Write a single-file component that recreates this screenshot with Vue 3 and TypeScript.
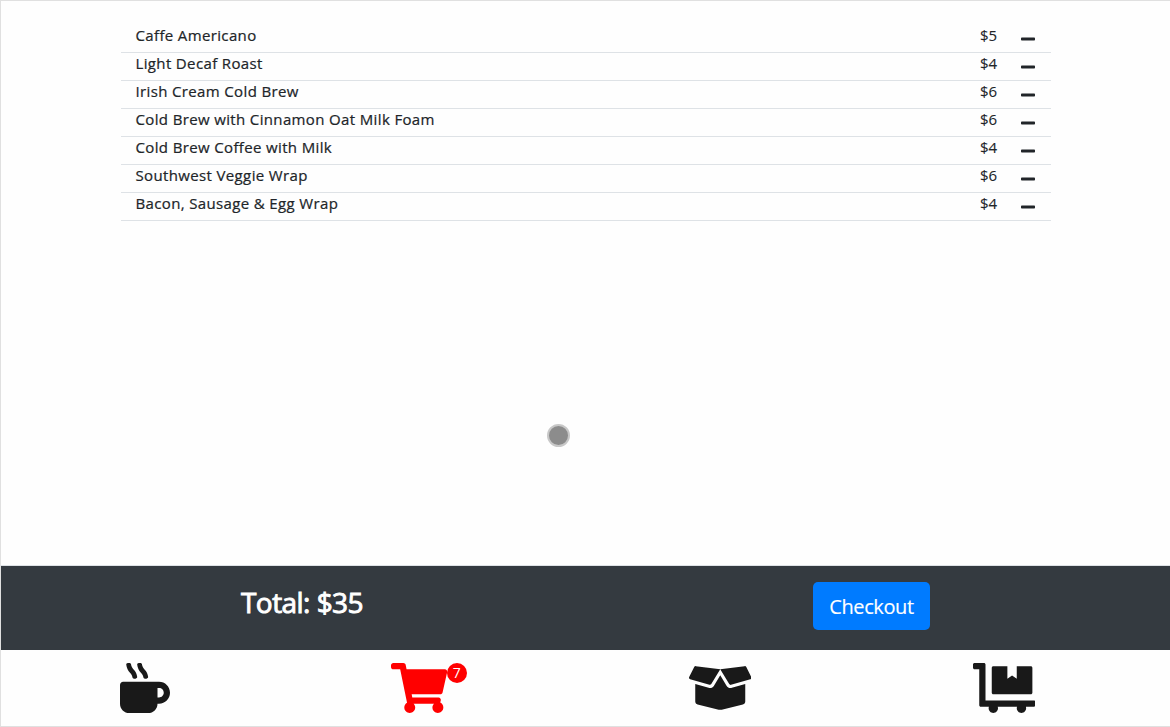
<script setup lang="ts">
interface CartItem {
  name: string
  price: number
}

const items: CartItem[] = [
  { name: 'Caffe Americano', price: 5 },
  { name: 'Light Decaf Roast', price: 4 },
  { name: 'Irish Cream Cold Brew', price: 6 },
  { name: 'Cold Brew with Cinnamon Oat Milk Foam', price: 6 },
  { name: 'Cold Brew Coffee with Milk', price: 4 },
  { name: 'Southwest Veggie Wrap', price: 6 },
  { name: 'Bacon, Sausage & Egg Wrap', price: 4 },
]

const total = items.reduce((sum, item) => sum + item.price, 0)
</script>

<template>
  <div class="app">
    <main class="content">
      <ul class="items">
        <li v-for="item in items" :key="item.name" class="item">
          <span class="name">{{ item.name }}</span>
          <span class="price">${{ item.price }}</span>
          <button class="remove" type="button" :aria-label="`Remove ${item.name}`">
            <svg viewBox="0 0 448 512" width="14" height="16">
              <path d="M416 208H32c-17.67 0-32 14.33-32 32v32c0 17.67 14.33 32 32 32h384c17.67 0 32-14.33 32-32v-32c0-17.67-14.33-32-32-32z" />
            </svg>
          </button>
        </li>
      </ul>
      <div class="pointer"></div>
    </main>

    <section class="summary">
      <h3 class="total">Total: ${{ total }}</h3>
      <button class="checkout" type="button">Checkout</button>
    </section>

    <nav class="tabs">
      <a class="tab">
        <svg viewBox="0 0 512 512" width="50" height="50">
          <path d="M127.1 146.5c1.3 7.7 8 13.5 16 13.5h16.5c9.8 0 17.6-8.5 16.3-18-3.8-28.2-16.4-54.2-36.6-74.7-14.4-14.7-23.6-33.3-26.4-53.5C111.8 5.9 105 0 96.8 0H80.4C70.6 0 63 8.5 64.1 18c3.9 31.9 18 61.3 40.6 84.4 12 12.2 19.7 27.5 22.4 44.1zm112 0c1.3 7.7 8 13.5 16 13.5h16.5c9.8 0 17.6-8.5 16.3-18-3.8-28.2-16.4-54.2-36.6-74.7-14.4-14.7-23.6-33.3-26.4-53.5C223.8 5.9 217 0 208.8 0h-16.4c-9.8 0-17.4 8.5-16.3 18 3.9 31.9 18 61.3 40.6 84.4 12 12.2 19.7 27.5 22.4 44.1zM400 192H32c-17.7 0-32 14.3-32 32v192c0 53 43 96 96 96h192c53 0 96-43 96-96h16c61.8 0 112-50.2 112-112s-50.2-112-112-112zm0 160h-16v-96h16c26.5 0 48 21.5 48 48s-21.5 48-48 48z" />
        </svg>
      </a>
      <a class="tab active">
        <svg viewBox="0 0 576 512" width="56.25" height="50">
          <path d="M528.12 301.319l47.273-208C578.806 78.301 567.391 64 551.99 64H159.208l-9.166-44.81C147.758 8.021 137.93 0 126.529 0H24C10.745 0 0 10.745 0 24v16c0 13.255 10.745 24 24 24h69.883l70.248 343.435C147.325 417.1 136 435.222 136 456c0 30.928 25.072 56 56 56s56-25.072 56-56c0-15.674-6.447-29.835-16.824-40h209.647C430.447 426.165 424 440.326 424 456c0 30.928 25.072 56 56 56s56-25.072 56-56c0-22.172-12.888-41.332-31.579-50.405l5.517-24.276c3.413-15.018-8.002-29.319-23.403-29.319H218.117l-6.545-32h293.145c11.206 0 20.92-7.754 23.403-18.681z" />
        </svg>
        <span class="badge">{{ items.length }}</span>
      </a>
      <a class="tab">
        <svg viewBox="0 0 640 512" width="62.5" height="50">
          <path d="M425.7 256c-16.9 0-32.8-9-41.4-23.4L320 126l-64.2 106.6c-8.7 14.5-24.6 23.5-41.5 23.5-4.5 0-9-.6-13.3-1.9L64 215v178c0 14.7 10 27.5 24.2 31l216.2 54.1c10.2 2.5 20.9 2.5 31 0L551.8 424c14.2-3.6 24.2-16.4 24.2-31V215l-137 39.1c-4.3 1.3-8.8 1.9-13.3 1.9zm212.6-112.2L586.8 41c-3.1-6.2-9.8-9.8-16.7-8.9L320 64l91.7 152.1c3.8 6.3 11.4 9.3 18.5 7.3l197.9-56.5c9.9-2.9 14.7-13.9 10.2-23.1zM53.2 41L1.7 143.8c-4.6 9.2.3 20.2 10.1 23l197.9 56.5c7.1 2 14.7-1 18.5-7.3L320 64 69.8 32.1c-6.9-.8-13.5 2.7-16.6 8.9z" />
        </svg>
      </a>
      <a class="tab">
        <svg viewBox="0 0 640 512" width="62.5" height="50">
          <path d="M208 320h384c8.8 0 16-7.2 16-16V48c0-8.8-7.2-16-16-16H448v128l-48-32-48 32V32H208c-8.8 0-16 7.2-16 16v256c0 8.8 7.2 16 16 16zm416 64H128V16c0-8.8-7.2-16-16-16H16C7.2 0 0 7.2 0 16v32c0 8.8 7.2 16 16 16h48v368c0 8.8 7.2 16 16 16h82.9c-1.8 5-2.9 10.4-2.9 16 0 26.5 21.5 48 48 48s48-21.5 48-48c0-5.6-1.2-11-2.9-16H451c-1.8 5-2.9 10.4-2.9 16 0 26.5 21.5 48 48 48s48-21.5 48-48c0-5.6-1.2-11-2.9-16H624c8.8 0 16-7.2 16-16v-32c0-8.8-7.2-16-16-16z" />
        </svg>
      </a>
    </nav>
  </div>
</template>

<style>
body {
  margin: 0;
  overflow: hidden;
}
</style>

<style scoped>
.app {
  box-sizing: border-box;
  display: flex;
  flex-direction: column;
  height: 727px;
  border: 1px solid #e0e0e0;
  border-right: 0;
  background: #fefefe;
  color: #212529;
  font-family: 'Segoe UI', 'Open Sans', 'Noto Sans', sans-serif;
}

.content {
  position: relative;
  flex: 1;
  padding: 24px 119px 0 120px;
}

.items {
  margin: 0;
  padding: 0;
  list-style: none;
}

.item {
  box-sizing: border-box;
  display: flex;
  height: 28px;
  padding: 0 16px 0 14.5px;
  border-bottom: 1px solid #dee2e6;
  font-size: 15px;
  font-weight: 500;
  line-height: 21px;
}

.name {
  flex: 1;
  letter-spacing: 0.36px;
  -webkit-text-stroke: 0.22px currentColor;
}

.price {
  width: 41px;
  -webkit-text-stroke: 0.1px currentColor;
}

.remove {
  display: flex;
  margin: 6px 0 0;
  padding: 0;
  border: 0;
  background: none;
}

.remove svg {
  fill: #212529;
}

.pointer {
  position: absolute;
  top: 423px;
  left: 546px;
  box-sizing: border-box;
  width: 23px;
  height: 23px;
  border: 2px solid #c8c8c8;
  border-radius: 50%;
  background: #8c8c8c;
}

.summary {
  box-sizing: border-box;
  display: flex;
  align-items: flex-start;
  justify-content: space-between;
  height: 85px;
  padding: 16px 240px 0;
  border-top: 1px solid #dee2e6;
  background: #343a40;
}

.total {
  margin: 3px 0 0;
  color: #fff;
  font-size: 28px;
  font-weight: 500;
  letter-spacing: -0.55px;
  line-height: 34px;
  -webkit-text-stroke: 0.9px currentColor;
}

.checkout {
  width: 117px;
  height: 48px;
  padding: 2px 0 0;
  border: 0;
  border-radius: 5px;
  background: #007bff;
  color: #fff;
  font-family: inherit;
  font-size: 20px;
  letter-spacing: -0.4px;
  line-height: 30px;
  -webkit-text-stroke: 0.15px currentColor;
}

.tabs {
  box-sizing: border-box;
  display: flex;
  justify-content: space-between;
  height: 76px;
  padding: 13px 134.5px 0 118.5px;
}

.tab {
  display: flex;
  align-items: flex-start;
}

.tab svg {
  fill: #191919;
}

.active svg {
  fill: #f00;
}

.badge {
  width: 20px;
  height: 20px;
  margin-left: -0.75px;
  border-radius: 50%;
  background: #f00;
  color: #fff;
  font-size: 14px;
  line-height: 20px;
  text-align: center;
}
</style>
